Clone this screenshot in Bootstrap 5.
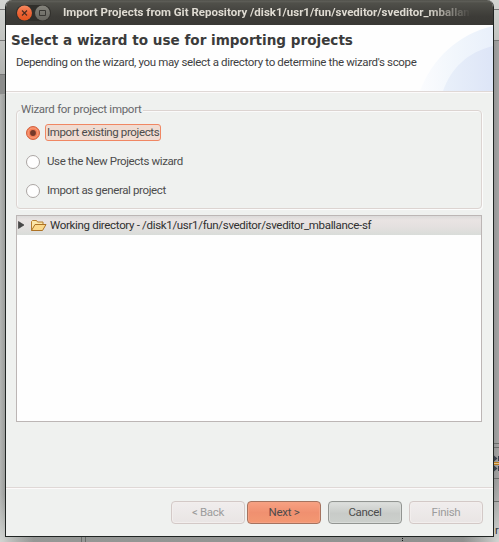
<!DOCTYPE html>
<html lang="en">
<head>
<meta charset="utf-8">
<meta name="viewport" content="width=device-width, initial-scale=1">
<title>Import Projects from Git Repository</title>
<link rel="stylesheet" href="https://cdn.jsdelivr.net/npm/bootstrap@5.3.0/dist/css/bootstrap.min.css">
<style>
html,body{height:542px}
body{font:11.5px/16px Roboto,"Noto Sans",sans-serif;color:#4c4c4c;background:linear-gradient(90deg,#b4b6b4 0,#969896 6px,#8f908f 492px,#a4a4a4 499px);}
.desktop{width:499px;height:542px}
.backdrop{left:0;top:0}
.dialog{width:489px;height:537px;margin-left:5px;background:#eff1ef;border:1px solid #202523;border-top:0;border-radius:7px 7px 0 0;overflow:hidden}
.titlebar{height:25px;background:linear-gradient(#4b4b45 0,#60605a 1px,#50504a 3px,#3d3c38 16px,#393834);padding-left:10px}
.wm-buttons{width:35px;height:16px;border-radius:8px;background:#302f2b}
.wm-title{font-size:11.5px;line-height:15px;padding-bottom:1px;font-weight:700;color:#dfdbd2;margin-left:12px;width:415px;-webkit-mask-image:linear-gradient(90deg,#000 365px,transparent 408px);mask-image:linear-gradient(90deg,#000 365px,transparent 408px)}
.banner{height:66px;background:#fefefe}
.banner-art{right:0;top:0}
.banner h1{font:700 13.57px/18px "DejaVu Sans",sans-serif;color:#3b3b3b;margin:0;padding:6px 0 0 5px}
.banner p{margin:0;padding:5px 0 0 10px;color:#3e3e42;letter-spacing:-.342px}
.rule{height:2px;background:#dfd8d6;border-bottom:1px solid #fcfafa}
.wizard-group{margin:9px 11px 0 10px;height:107px;border:1px solid #dcd4d1;border-radius:4px;box-shadow:1px 1px 0 #fcfcfc,inset 1px 1px 0 #fafafa;letter-spacing:-.37px}
.wizard-group legend{float:none;width:auto;font-size:11.5px;line-height:15px;color:#68686b;background:#eff1ef;margin:0 0 0 3px;padding:0 1px 1px;letter-spacing:-.28px}
.choice{height:29px;padding-left:8px}
.choice-label{margin-left:4px;padding:0 1px;line-height:15px;border:1px solid transparent;border-radius:3px}
.choice-label.focused{background:#f0dcd2;border-color:#f08763}
.tree{margin:6px 11px 0 10px;height:207px;border:1px solid #bcb6b5;background:#fefefe}
.tree-row{height:19px;background:linear-gradient(#dcdbda,#e9e4e3 4px,#e4e0df 11px,#d9dcd9);color:#303030;letter-spacing:-.32px}
.tree-row span{padding-bottom:2px}
.tree-row svg{margin-top:-1px}
.footer-rule{margin-top:65px}
.actions{padding:12px 10px 0 0}
.actions .btn{width:74px;height:23px;padding:0 0 2px;font:11.5px/18px Roboto,"Noto Sans",sans-serif;letter-spacing:-.3px;border-radius:4px;color:#4c4c4c;margin-left:7px}
.btn-grey{border:1px solid #929592;background:linear-gradient(#dee0de,#c8cbc8 55%,#ccd0cc);box-shadow:inset 0 0 0 1px #d8dbd8}
.actions .btn-go{margin-left:2px;border:1px solid #a5735f;background:linear-gradient(#f7a182,#f09070 50%,#f39872);box-shadow:inset 0 0 0 1px #f5a183}
.actions .btn-off{border:1px solid #d3c9c7;background:linear-gradient(#f0eded,#e9e5e4);color:#9c9c9c;opacity:1;box-shadow:inset 0 0 0 1px #f2eeed}
</style>
</head>
<body class="m-0 overflow-hidden">
<div class="desktop position-relative overflow-hidden">
<svg class="backdrop position-absolute" width="499" height="542" viewBox="0 0 499 542" aria-hidden="true">
<defs><linearGradient id="topShade" x2="0" y2="1"><stop stop-color="#d3d5d2"/><stop offset="1" stop-color="#a9aaa8"/></linearGradient>
<radialGradient id="cornerGlow"><stop stop-color="#d2d5d2"/><stop offset="1" stop-color="#c4c7c4" stop-opacity="0"/></radialGradient></defs>
<path d="M0 0H12V95H0zM485 0H499V40H485z" fill="url(#topShade)"/>
<path d="M0 9.5H5M0 40.5H5M0 74.5H5M493 9.5H499M493 40.5H499" stroke="#777"/>
<path d="M0 75H5V94H0z" fill="#8b8c8b"/>
<ellipse cx="0" cy="542" rx="34" ry="48" fill="url(#cornerGlow)"/>
<ellipse cx="499" cy="542" rx="36" ry="60" fill="url(#cornerGlow)"/>
<path d="M493 443.5H499M493 447.5H499M493 478.5H499M493 501.5H499M81.500 537V542M85.500 537V542" stroke="#6a6c6a"/>
<path d="M494 455.500l3.500 3-3.500 3zM494 465.500l3.500 3-3.500 3z" fill="#39404b"/><path d="M498.500 456v5M498.500 466v5" stroke="#39404b"/><path d="M494 462.500H499M494 464.500H499" stroke="#b9791c"/><path d="M494 463.500H499" stroke="#e2c48c"/>
<path d="M402.500 538V542" stroke="#111" stroke-dasharray="1 1"/>
<text x="495" y="534" font-size="11" fill="#333">r</text>
</svg>
<main class="dialog position-relative">
<header class="titlebar d-flex align-items-center">
<span class="wm-buttons d-flex flex-shrink-0">
<svg width="35" height="16" viewBox="0 0 35 16" aria-label="Close and maximize"><defs><linearGradient id="closeFill" x2="0" y2="1"><stop stop-color="#f58a60"/><stop offset=".5" stop-color="#ed6436"/><stop offset="1" stop-color="#e4551f"/></linearGradient><linearGradient id="maxFill" x2="0" y2="1"><stop stop-color="#85847c"/><stop offset="1" stop-color="#66655f"/></linearGradient></defs><circle cx="8.500" cy="8" r="7.500" fill="url(#closeFill)"/><path d="M6 5.500l5 5m0-5l-5 5" stroke="#4c2d20" stroke-width="1.200"/><circle cx="26.500" cy="8" r="7.500" fill="url(#maxFill)"/><path d="M23.500 5.500h6v5h-6z" fill="none" stroke="#383733"/></svg>
</span>
<span class="wm-title text-nowrap">Import Projects from Git Repository /disk1/usr1/fun/sveditor/sveditor_mballanc</span>
</header>
<section class="banner position-relative">
<svg class="banner-art position-absolute" width="75" height="66" viewBox="0 0 75 66" aria-hidden="true"><defs><linearGradient id="outerArc"><stop stop-color="#fbfcfe"/><stop offset=".5" stop-color="#f1f6fc"/><stop offset="1" stop-color="#e9f0fb"/></linearGradient><linearGradient id="innerArc"><stop stop-color="#e9f0fa"/><stop offset="1" stop-color="#dde5f7"/></linearGradient></defs><path d="M2 66C14 34 40 9 75 1V66z" fill="url(#outerArc)"/><path d="M25 66C33 43 50 27 75 21V66z" fill="url(#innerArc)"/></svg>
<div class="position-relative"><h1 class="text-nowrap">Select a wizard to use for importing projects</h1>
<p class="text-nowrap">Depending on the wizard, you may select a directory to determine the wizard's scope</p></div>
</section>
<div class="rule"></div>
<fieldset class="wizard-group">
<legend>Wizard for project import</legend>
<div class="choice d-flex align-items-center"><svg width="16" height="16" viewBox="0 0 16 16"><circle cx="8" cy="8" r="6.500" fill="#f37d55" stroke="#d26442"/><circle cx="8" cy="8" r="5" fill="none" stroke="#f7a17f"/><circle cx="8" cy="8" r="2.900" fill="#74392a"/></svg><span class="choice-label focused">Import existing projects</span></div>
<div class="choice d-flex align-items-center"><svg width="16" height="16" viewBox="0 0 16 16"><circle cx="8" cy="8" r="6.500" fill="#fefefe" stroke="#aaa5a3"/></svg><span class="choice-label">Use the New Projects wizard</span></div>
<div class="choice d-flex align-items-center"><svg width="16" height="16" viewBox="0 0 16 16"><circle cx="8" cy="8" r="6.500" fill="#fefefe" stroke="#aaa5a3"/></svg><span class="choice-label">Import as general project</span></div>
</fieldset>
<div class="tree"><div class="tree-row d-flex align-items-center">
<svg width="33" height="18" viewBox="0 0 33 18" class="flex-shrink-0"><path d="M1.500 5.500v7l5.500-3.500z" fill="#484848" stroke="#333" stroke-width=".6"/><path d="M14.500 14.500V5.500l1-1h4l1 1.500h5.500v3" fill="#fbe7a8" stroke="#b57d2c"/><path d="M14.500 14.500l3.500-6h11l-3.500 6z" fill="#fbd98b" stroke="#ad7224"/></svg><span class="text-nowrap">Working directory - /disk1/usr1/fun/sveditor/sveditor_mballance-sf</span></div></div>
<div class="rule footer-rule"></div>
<footer class="actions d-flex justify-content-end">
<button class="btn btn-off" disabled>&lt; Back</button><button class="btn btn-go">Next &gt;</button><button class="btn btn-grey">Cancel</button><button class="btn btn-off" disabled>Finish</button>
</footer>
</main>
</div>
<script src="https://cdn.jsdelivr.net/npm/bootstrap@5.3.0/dist/js/bootstrap.bundle.min.js"></script>
</body>
</html>
